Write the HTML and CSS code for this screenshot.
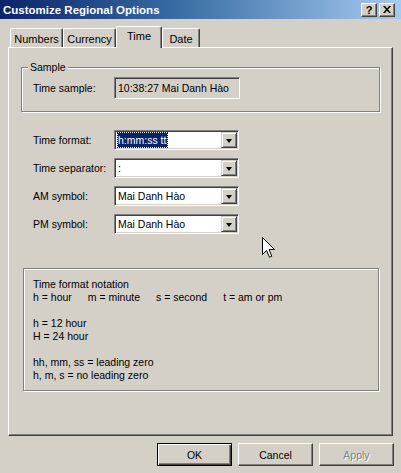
FILE: index.html
```html
<!DOCTYPE html>
<html>
<head>
<meta charset="utf-8">
<link rel="stylesheet" href="styles.css">
</head>
<body>
<div class="window">
  <div class="titlebar">
    <span class="title">Customize Regional Options</span>
    <div class="caption-buttons">
      <span class="cap-btn help">?</span>
      <span class="cap-btn close"><svg width="8" height="7" viewBox="0 0 8 7"><path d="M0 0h2l2 2.5L6 0h2L5 3.5 8 7H6L4 4.5 2 7H0l3-3.5z" fill="#000"/></svg></span>
    </div>
  </div>
  <div class="tabs">
    <div class="tab t-numbers">Numbers</div>
    <div class="tab t-currency">Currency</div>
    <div class="tab t-time selected">Time</div>
    <div class="tab t-date">Date</div>
  </div>
  <div class="panel">
    <fieldset class="group sample">
      <legend>Sample</legend>
      <div class="row">
        <span class="label">Time sample:</span>
        <span class="readonly">10:38:27 Mai Danh Hào</span>
      </div>
    </fieldset>

    <div class="form">
      <div class="row">
        <span class="label">Time format:</span>
        <div class="combo"><span class="value"><span class="sel">h:mm:ss tt</span></span><span class="drop"><span class="arrow"></span></span></div>
      </div>
      <div class="row">
        <span class="label">Time separator:</span>
        <div class="combo"><span class="value">:</span><span class="drop"><span class="arrow"></span></span></div>
      </div>
      <div class="row">
        <span class="label">AM symbol:</span>
        <div class="combo"><span class="value">Mai Danh Hào</span><span class="drop"><span class="arrow"></span></span></div>
      </div>
      <div class="row">
        <span class="label">PM symbol:</span>
        <div class="combo"><span class="value">Mai Danh Hào</span><span class="drop"><span class="arrow"></span></span></div>
      </div>
    </div>

    <div class="group notation">
      <div class="line">Time format notation</div>
      <div class="line pairs"><span>h = hour</span><span>m = minute</span><span>s = second</span><span>t = am or pm</span></div>
      <div class="line">&nbsp;</div>
      <div class="line">h = 12 hour</div>
      <div class="line">H = 24 hour</div>
      <div class="line">&nbsp;</div>
      <div class="line">hh, mm, ss = leading zero</div>
      <div class="line">h, m, s = no leading zero</div>
    </div>
  </div>
  <div class="buttons">
    <span class="btn default">OK</span>
    <span class="btn">Cancel</span>
    <span class="btn disabled">Apply</span>
  </div>
  <svg class="cursor" width="13" height="21" viewBox="0 0 13 21"><path d="M0.5 0.5V17.5L4.5 13.5L7.5 20.2L9.8 19.2L7 12.5H12.5Z" fill="#fff" stroke="#000" stroke-width="1" stroke-linejoin="miter"/></svg>
</div>
</body>
</html>
```

FILE: styles.css
```css
html, body {
  margin: 0;
  padding: 0;
}
body {
  width: 401px;
  height: 473px;
  overflow: hidden;
  background: #d4d0c8;
  font-family: "Liberation Sans", Arial, sans-serif;
  font-size: 10.5px;
  color: #000;
}
.window {
  position: relative;
  width: 401px;
  height: 473px;
}
.titlebar {
  height: 19px;
  background: linear-gradient(to right, #0a246a 0%, #3a6ea5 45%, #a6caf0 100%);
  display: flex;
  align-items: center;
  justify-content: space-between;
  padding: 0 6px 0 3px;
}
.title {
  color: #fff;
  font-weight: bold;
  font-size: 11.5px;
  letter-spacing: 0;
}
.caption-buttons {
  display: flex;
  gap: 2px;
}
.cap-btn {
  width: 14px;
  height: 12px;
  background: #d4d0c8;
  border: 1px solid;
  border-color: #fff #404040 #404040 #fff;
  box-shadow: inset -1px -1px 0 #808080;
  display: flex;
  align-items: center;
  justify-content: center;
  font-weight: bold;
  font-size: 11px;
  line-height: 12px;
}
.tabs {
  display: flex;
  align-items: flex-end;
  padding-left: 10px;
  margin-top: 7px;
  height: 21px;
}
.tab {
  box-sizing: border-box;
  height: 19px;
  border-left: 1px solid #fff;
  border-top: 1px solid #fff;
  border-right: 1px solid #404040;
  box-shadow: inset -1px 0 0 #808080;
  border-radius: 2px 2px 0 0;
  display: flex;
  align-items: center;
  justify-content: center;
  padding-top: 1px;
  font-size: 11px;
}
.t-numbers { width: 53px; }
.t-currency { width: 53px; }
.t-time { width: 46px; }
.t-date { width: 38px; }
.tab.selected {
  height: 22px;
  margin-bottom: -1px;
  position: relative;
  z-index: 1;
  background: #d4d0c8;
  padding-top: 0;
  padding-bottom: 3px;
}
.panel {
  box-sizing: border-box;
  margin-left: 8px;
  width: 385px;
  height: 389px;
  border-left: 1px solid #fff;
  border-top: 1px solid #fff;
  border-right: 1px solid #404040;
  border-bottom: 1px solid #404040;
  box-shadow: inset -1px -1px 0 #808080;
  padding: 13px 0 0 12px;
}
.group {
  border: 1px solid #808080;
  box-shadow: inset 1px 1px 0 #fff, 1px 1px 0 #fff;
}
fieldset.sample {
  margin: 0;
  width: 359px;
  box-sizing: border-box;
  padding: 3px 6px 12px 6px;
}
fieldset.sample legend {
  padding: 0 2px;
  line-height: 13px;
  background: #d4d0c8;
}
.row {
  display: flex;
  align-items: center;
}
.sample .row {
  padding-left: 5px;
}
.label {
  width: 81px;
  white-space: nowrap;
}
.readonly {
  box-sizing: border-box;
  width: 126px;
  height: 22px;
  border: 1px solid;
  border-color: #808080 #fff #fff #808080;
  box-shadow: inset 1px 1px 0 #404040;
  display: flex;
  align-items: center;
  padding-left: 3px;
}
.form {
  margin-top: 18px;
  padding-left: 12px;
  display: flex;
  flex-direction: column;
  gap: 8px;
}
.combo {
  box-sizing: border-box;
  width: 125px;
  height: 20px;
  background: #fff;
  border: 1px solid;
  border-color: #808080 #fff #fff #808080;
  box-shadow: inset 1px 1px 0 #404040, inset -1px -1px 0 #d4d0c8;
  display: flex;
  align-items: center;
  justify-content: space-between;
  padding: 1px 1px 1px 2px;
}
.value {
  padding-left: 1px;
  white-space: nowrap;
}
.sel {
  background: #0a246a;
  color: #fff;
  outline: 1px dotted #000;
  padding: 1px 1px 1px 0;
}
.drop {
  box-sizing: border-box;
  width: 16px;
  height: 16px;
  background: #d4d0c8;
  border: 1px solid;
  border-color: #d4d0c8 #404040 #404040 #d4d0c8;
  box-shadow: inset 1px 1px 0 #fff, inset -1px -1px 0 #808080;
  display: flex;
  align-items: center;
  justify-content: center;
}
.arrow {
  width: 0;
  height: 0;
  border-left: 3.5px solid transparent;
  border-right: 3.5px solid transparent;
  border-top: 4px solid #000;
  margin-top: 1px;
}
.notation {
  box-sizing: border-box;
  margin-top: 34px;
  margin-left: 2px;
  width: 356px;
  height: 123px;
  padding: 9px 0 0 9px;
}
.line {
  line-height: 13px;
  height: 13px;
  white-space: nowrap;
}
.pairs {
  display: flex;
  gap: 16px;
}
.buttons {
  display: flex;
  justify-content: flex-end;
  gap: 6px;
  margin-top: 7px;
  padding-right: 7px;
}
.btn {
  box-sizing: border-box;
  width: 75px;
  height: 23px;
  border: 1px solid;
  border-color: #fff #404040 #404040 #fff;
  box-shadow: inset -1px -1px 0 #808080;
  display: flex;
  align-items: center;
  justify-content: center;
}
.btn.default {
  border: 1px solid #000;
  box-shadow: inset 1px 1px 0 #fff, inset -1px -1px 0 #404040, inset -2px -2px 0 #808080;
}
.btn.disabled {
  color: #808080;
  text-shadow: 1px 1px 0 #fff;
}
.cursor {
  position: absolute;
  left: 262px;
  top: 237px;
}
```
